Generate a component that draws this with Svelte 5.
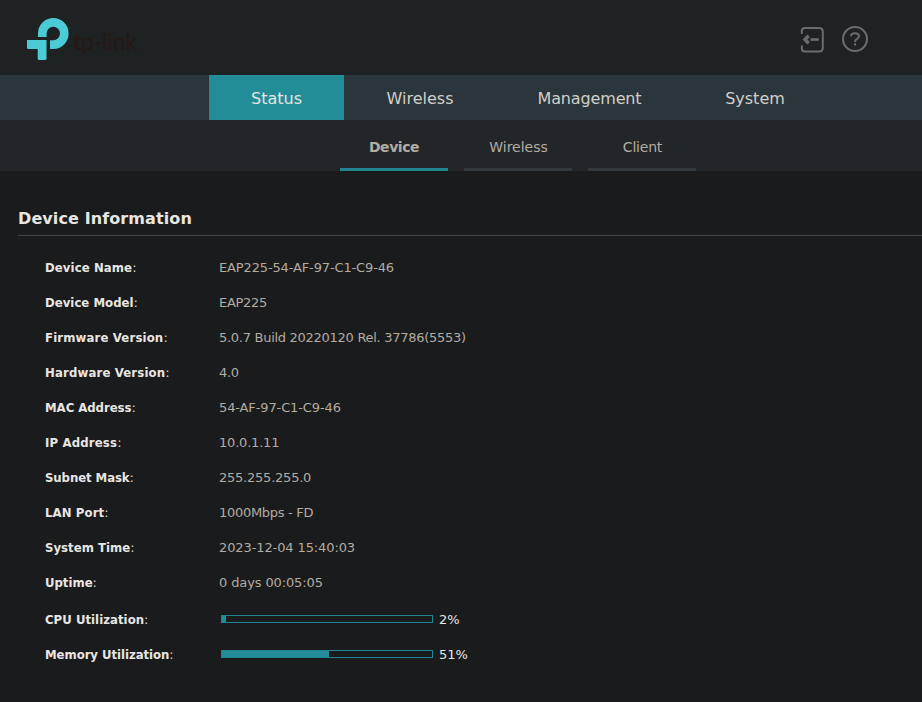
<script>
  const tabs = [
    { label: 'Status', width: 135, ls: 0, active: true },
    { label: 'Wireless', width: 152, ls: 0 },
    { label: 'Management', width: 187, ls: -0.15 },
    { label: 'System', width: 144, ls: 0 }
  ];
  const subtabs = [
    { label: 'Device', ls: -0.45, active: true },
    { label: 'Wireless', ls: 0 },
    { label: 'Client', ls: -0.2 }
  ];
  const rows = [
    { label: 'Device Name', value: 'EAP225-54-AF-97-C1-C9-46', ls: 0.1, vs: -0.14 },
    { label: 'Device Model', value: 'EAP225', ls: 0.03, vs: -0.3 },
    { label: 'Firmware Version', value: '5.0.7 Build 20220120 Rel. 37786(5553)', ls: 0.16, vs: -0.28 },
    { label: 'Hardware Version', value: '4.0', ls: 0.16, vs: -0.3 },
    { label: 'MAC Address', value: '54-AF-97-C1-C9-46', ls: -0.03, vs: -0.12 },
    { label: 'IP Address', value: '10.0.1.11', ls: 0.17, vs: -0.2 },
    { label: 'Subnet Mask', value: '255.255.255.0', ls: -0.07, vs: -0.23 },
    { label: 'LAN Port', value: '1000Mbps - FD', ls: 0.12, vs: -0.3 },
    { label: 'System Time', value: '2023-12-04 15:40:03', ls: 0.03, vs: -0.11 },
    { label: 'Uptime', value: '0 days 00:05:05', ls: 0, vs: -0.12 }
  ];
  const meters = [
    { label: 'CPU Utilization', percent: 2, ls: 0.04 },
    { label: 'Memory Utilization', percent: 51, ls: -0.04 }
  ];
</script>

<div class="page">
  <header>
    <div class="brand">
      <svg class="mark" width="42" height="42" viewBox="0 0 42 42" fill="#4acbd6">
        <path d="M11 19V15.5A15.3 15.5 0 1 1 26.3 31H23V22.3H26.3A6.7 6.8 0 1 0 19.6 15.5V19Z" />
        <path d="M0 22H19.5V40.5Q19.5 42 18 42H12.2Q10.7 42 10.7 40.5V31H1.5Q0 31 0 29.5Z" />
      </svg>
      <span class="wordmark">tp-link</span>
    </div>
    <div class="actions">
      <svg width="24" height="27" viewBox="0 0 24 27" fill="none" stroke="#6c6c6c" stroke-width="2">
        <path d="M1.8 8V5Q1.8 2 5 2H19Q22.8 2 22.8 5.5V21.8Q22.8 25.6 19 25.6H5Q1.8 25.6 1.8 22.6V19.5" />
        <path d="M8.6 9.8L5 13.5L8.6 17.2" stroke-width="3.4" />
        <path d="M10.5 13.5H18.8" stroke-width="2.6" />
      </svg>
      <svg width="28" height="28" viewBox="0 0 28 28" fill="none" stroke="#6c6c6c" stroke-width="2">
        <circle cx="14" cy="14" r="12" />
        <path d="M10 11.3Q10 8.2 14 8.2Q18 8.2 18 11Q18 12.8 16 13.9Q14 15 14 16.9" />
        <path d="M14 18.2V20.4" />
      </svg>
    </div>
  </header>

  <nav class="main">
    {#each tabs as tab}
      <a class:active={tab.active} style="width:{tab.width}px"><span style="letter-spacing:{tab.ls}px">{tab.label}</span></a>
    {/each}
  </nav>

  <nav class="sub">
    {#each subtabs as tab}
      <a class:active={tab.active}><span style="letter-spacing:{tab.ls}px">{tab.label}</span></a>
    {/each}
  </nav>

  <main>
    <h2>Device Information</h2>
    <div class="table">
      {#each rows as row}
        <div class="row">
          <div class="label"><b style="letter-spacing:{row.ls}px">{row.label}</b>:</div>
          <div class="value" style="letter-spacing:{row.vs}px">{row.value}</div>
        </div>
      {/each}
      <div class="meters">
        {#each meters as m}
          <div class="row">
            <div class="label"><b style="letter-spacing:{m.ls}px">{m.label}</b>:</div>
            <div class="bar"><div class="fill" style="width:{m.percent}%"></div></div>
            <span class="percent">{m.percent}%</span>
          </div>
        {/each}
      </div>
    </div>
  </main>
</div>

<style>
  :global(body) { background: #1a1b1c; }
  .page {
    width: 922px;
    height: 702px;
    overflow: hidden;
    background: #1a1b1c;
    color: #b2aca2;
    font-family: Verdana, "DejaVu Sans", sans-serif;
    font-size: 13px;
  }
  header {
    display: flex;
    justify-content: space-between;
    box-sizing: border-box;
    height: 75px;
    padding: 18px 53px 0 27px;
    background: #1f2223;
  }
  .brand { display: flex; }
  .wordmark {
    margin: 8px 0 0 4px;
    font: 23px/30px Lato, sans-serif;
    letter-spacing: -0.2px;
    color: #251917;
    -webkit-text-stroke: 0.3px #251917;
  }
  .actions { display: flex; gap: 17px; padding-top: 8px; }
  .actions svg:last-child { margin-top: -1px; }
  .main {
    display: flex;
    height: 45px;
    padding-left: 209px;
    background: #2b363c;
  }
  .main a {
    text-align: center;
    font-size: 16px;
    line-height: 47px;
    height: 45px;
    color: #d2cec7;
    white-space: nowrap;
  }
  .main .active { background: #228d97; color: #e6e4e0; }
  .sub {
    display: flex;
    gap: 16px;
    height: 51px;
    padding-left: 340px;
    background: #232629;
  }
  .sub a {
    box-sizing: border-box;
    width: 108px;
    height: 51px;
    padding-left: 1px;
    border-bottom: 3px solid #34393d;
    text-align: center;
    font-size: 14px;
    line-height: 55px;
  }
  .sub .active { padding-left: 0; border-color: #208590; font-weight: bold; }
  main { padding-left: 18px; }
  h2 {
    box-sizing: border-box;
    height: 65px;
    margin: 0;
    padding-top: 35px;
    border-bottom: 1px solid #424445;
    font-size: 16px;
    line-height: 26px;
    letter-spacing: 0.1px;
    color: #e8e6e3;
  }
  .table { padding: 14px 0 0 27px; }
  .row { display: flex; align-items: center; height: 35px; white-space: nowrap; }
  .label { width: 174px; color: #d8d4cf; }
  .label b { font-family: "DejaVu Sans Condensed", "DejaVu Sans", sans-serif; font-stretch: condensed; color: #e8e6e3; }
  .meters { padding-top: 2px; }
  .bar {
    box-sizing: border-box;
    width: 212px;
    height: 8px;
    margin: -2px 6px 0 2px;
    border: 1px solid #208590;
  }
  .fill { height: 100%; background: #228d97; }
  .percent { color: #e8e6e3; }
</style>
